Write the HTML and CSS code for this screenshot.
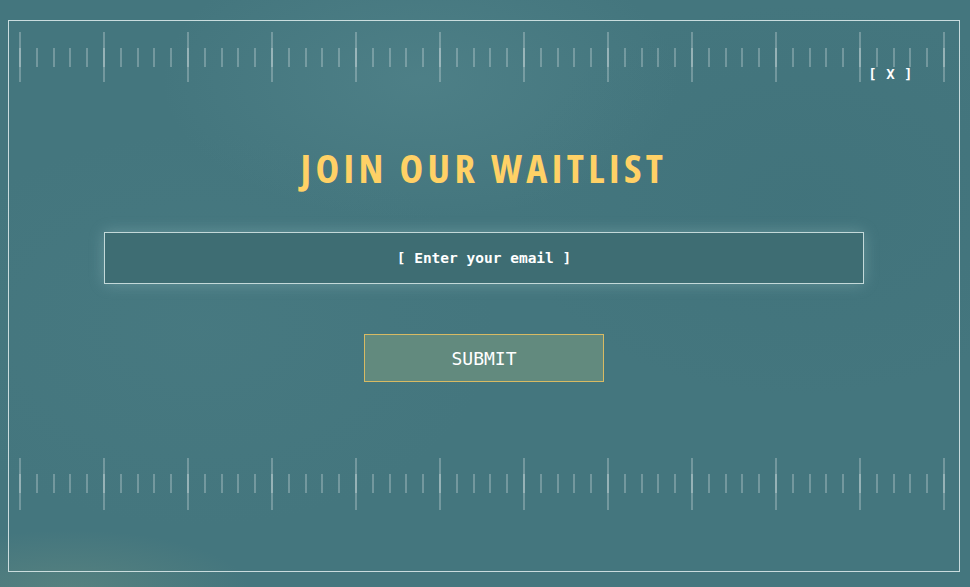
FILE: index.html
```html
<!DOCTYPE html>
<html lang="en">
<head>
<meta charset="utf-8">
<title>Join our waitlist</title>
<link rel="stylesheet" href="styles.css">
</head>
<body>
  <div class="frame">
    <div class="ruler"></div>
    <button class="close" type="button">[ X ]</button>
    <h1 class="title">JOIN OUR WAITLIST</h1>
    <form class="signup">
      <input class="email" type="email" placeholder="[ Enter your email ]">
      <button class="submit" type="button">SUBMIT</button>
    </form>
    <div class="ruler ruler-bottom"></div>
  </div>
</body>
</html>
```

FILE: styles.css
```css
html, body {
  height: 100%;
}

body {
  margin: 0;
  overflow: hidden;
  background-color: #44767e;
  background-image:
    radial-gradient(ellipse 180px 60px at 70px 590px, rgba(120, 150, 130, 0.35), rgba(120, 150, 130, 0) 100%),
    radial-gradient(ellipse 260px 140px at 420px 80px, rgba(110, 160, 165, 0.22), rgba(110, 160, 165, 0) 100%),
    radial-gradient(ellipse 300px 200px at 200px 330px, rgba(90, 140, 145, 0.12), rgba(90, 140, 145, 0) 100%),
    radial-gradient(ellipse 300px 200px at 800px 200px, rgba(50, 100, 110, 0.15), rgba(50, 100, 110, 0) 100%);
  font-family: "DejaVu Sans Mono", "Liberation Mono", monospace;
}

.frame {
  position: relative;
  box-sizing: border-box;
  width: 952px;
  height: 552px;
  margin: 20px 0 0 8px;
  border: 1px solid rgba(225, 238, 238, 0.85);
  display: flex;
  flex-direction: column;
  align-items: center;
}

/* ruler: a major tick every 84px, minor ticks every fifth of that */
.ruler {
  width: 926px;
  height: 50px;
  margin: 11px 0 0 10px;
  align-self: flex-start;
  flex: none;
  background-image:
    repeating-linear-gradient(to right, rgba(255, 255, 255, 0.25) 0 2px, transparent 2px 84px),
    repeating-linear-gradient(to right, rgba(255, 255, 255, 0.25) 0 2px, transparent 2px 16.8px);
  background-repeat: no-repeat;
  background-size: 100% 100%, 100% 19px;
  background-position: 0 0, 0 16px;
}

.ruler-bottom {
  margin-top: 76px;
  height: 52px;
}

.close {
  position: absolute;
  top: 45px;
  right: 46px;
  padding: 0;
  border: 0;
  background: none;
  color: #ffffff;
  font-family: "DejaVu Sans Mono", "Liberation Mono", monospace;
  font-size: 14px;
  font-weight: bold;
  line-height: 16px;
  letter-spacing: 0.5px;
  cursor: pointer;
}

.title {
  margin: 62px 0 0;
  font-family: "Open Sans", "DejaVu Sans", sans-serif;
  font-stretch: 75%;
  font-weight: bold;
  font-size: 40px;
  line-height: 48px;
  letter-spacing: 4.4px;
  color: #ffd166;
}

.signup {
  margin: 40px 0 0;
  display: flex;
  flex-direction: column;
  align-items: center;
}

.email {
  box-sizing: border-box;
  width: 760px;
  height: 52px;
  margin: 0;
  padding: 0 12px;
  border: 1px solid rgba(210, 228, 228, 0.9);
  background: #3e6d73;
  box-shadow: 0 0 14px rgba(190, 225, 228, 0.28);
  color: #ffffff;
  text-align: center;
  font-family: "DejaVu Sans Mono", "Liberation Mono", monospace;
  font-size: 14.5px;
  font-weight: bold;
  outline: none;
}

.email::placeholder {
  color: #ffffff;
  opacity: 1;
}

.submit {
  box-sizing: border-box;
  width: 240px;
  height: 48px;
  margin-top: 50px;
  padding: 0;
  border: 1px solid #d8ba63;
  background: #628a7e;
  color: #ffffff;
  font-family: "DejaVu Sans Mono", "Liberation Mono", monospace;
  font-size: 18px;
  cursor: pointer;
}
```
